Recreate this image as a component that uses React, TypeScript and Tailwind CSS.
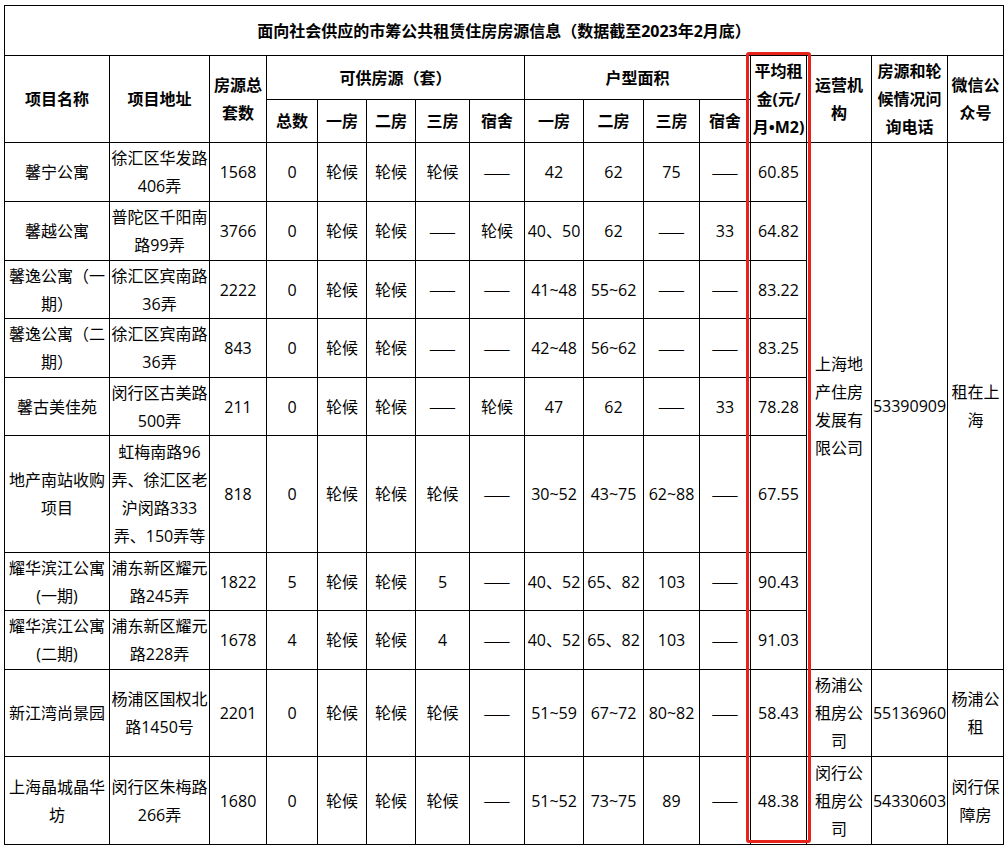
import * as React from "react";

type Row = {
    h: string;
    cells: React.ReactNode[];
};

// em dashes look joined only in the CJK face
const D = <span className="font-['Noto_Sans_CJK_SC',sans-serif]">——</span>;

const colWidths = [
    "w-[105px]", "w-[100px]", "w-[57px]", "w-[51px]", "w-[49px]", "w-[49px]", "w-[54px]", "w-[55px]",
    "w-[59px]", "w-[60px]", "w-[56px]", "w-[51px]", "w-[56px]", "w-[65px]", "w-[76px]", "w-[56px]",
];

const rows: Row[] = [
    { h: "h-[59px]", cells: ["馨宁公寓", <>徐汇区华发路<br />406弄</>, "1568", "0", "轮候", "轮候", "轮候", D, "42", "62", "75", D, "60.85"] },
    { h: "h-[59px]", cells: ["馨越公寓", <>普陀区千阳南<br />路99弄</>, "3766", "0", "轮候", "轮候", D, "轮候", "40、50", "62", D, "33", "64.82"] },
    { h: "h-[58px]", cells: [<>馨逸公寓（一<br />期）</>, <>徐汇区宾南路<br />36弄</>, "2222", "0", "轮候", "轮候", D, D, "41~48", "55~62", D, D, "83.22"] },
    { h: "h-[59px]", cells: [<>馨逸公寓（二<br />期）</>, <>徐汇区宾南路<br />36弄</>, "843", "0", "轮候", "轮候", D, D, "42~48", "56~62", D, D, "83.25"] },
    { h: "h-[58px]", cells: ["馨古美佳苑", <>闵行区古美路<br />500弄</>, "211", "0", "轮候", "轮候", D, "轮候", "47", "62", D, "33", "78.28"] },
    { h: "h-[117px]", cells: [<>地产南站收购<br />项目</>, <>虹梅南路96<br />弄、徐汇区老<br />沪闵路333<br />弄、150弄等</>, "818", "0", "轮候", "轮候", "轮候", D, "30~52", "43~75", "62~88", D, "67.55"] },
    { h: "h-[58px]", cells: [<>耀华滨江公寓<br />(一期)</>, <>浦东新区耀元<br />路245弄</>, "1822", "5", "轮候", "轮候", "5", D, "40、52", "65、82", "103", D, "90.43"] },
    { h: "h-[59px]", cells: [<>耀华滨江公寓<br />(二期)</>, <>浦东新区耀元<br />路228弄</>, "1678", "4", "轮候", "轮候", "4", D, "40、52", "65、82", "103", D, "91.03"] },
    { h: "h-[87px]", cells: ["新江湾尚景园", <>杨浦区国权北<br />路1450号</>, "2201", "0", "轮候", "轮候", "轮候", D, "51~59", "67~72", "80~82", D, "58.43"] },
    { h: "h-[88px]", cells: [<>上海晶城晶华<br />坊</>, <>闵行区朱梅路<br />266弄</>, "1680", "0", "轮候", "轮候", "轮候", D, "51~52", "73~75", "89", D, "48.38"] },
];

// trailing cells for rows with their own operator info
const tails: Record<number, React.ReactNode[]> = {
    8: [<>杨浦公<br />租房公<br />司</>, "55136960", <>杨浦公<br />租</>],
    9: [<>闵行公<br />租房公<br />司</>, "54330603", <>闵行保<br />障房</>],
};

const td = "border border-black px-0 py-0 text-center align-middle whitespace-nowrap";
const th = "border border-black px-0 py-0 text-center align-middle whitespace-nowrap font-bold";

export default function App() {
    return (
        <div className="bg-white min-h-[850px] pl-[4px] pt-[5px] text-black text-[16px] leading-[28px] font-['Open_Sans','Noto_Sans_CJK_SC',sans-serif]">
            <div className="relative w-[999px]">
                <table className="table-fixed border-collapse w-[999px]">
                    <colgroup>
                        {colWidths.map((w, i) => (
                            <col key={i} className={w} />
                        ))}
                    </colgroup>
                    <thead>
                        <tr className="h-[50px]">
                            <th colSpan={16} className={th}>
                                面向社会供应的市筹公共租赁住房房源信息（数据截至2023年2月底）
                            </th>
                        </tr>
                        <tr className="h-[44px]">
                            <th rowSpan={2} className={th}>项目名称</th>
                            <th rowSpan={2} className={th}>项目地址</th>
                            <th rowSpan={2} className={th}>房源总<br />套数</th>
                            <th colSpan={5} className={th}>可供房源（套）</th>
                            <th colSpan={4} className={th}>户型面积</th>
                            <th rowSpan={2} className={th}>平均租<br />金(元/<br />月•M2)</th>
                            <th rowSpan={2} className={th}>运营机<br />构</th>
                            <th rowSpan={2} className={th}>房源和轮<br />候情况问<br />询电话</th>
                            <th rowSpan={2} className={th}>微信公<br />众号</th>
                        </tr>
                        <tr className="h-[43px]">
                            <th className={th}>总数</th>
                            <th className={th}>一房</th>
                            <th className={th}>二房</th>
                            <th className={th}>三房</th>
                            <th className={th}>宿舍</th>
                            <th className={th}>一房</th>
                            <th className={th}>二房</th>
                            <th className={th}>三房</th>
                            <th className={th}>宿舍</th>
                        </tr>
                    </thead>
                    <tbody>
                        {rows.map((row, i) => (
                            <tr key={i} className={row.h}>
                                {row.cells.map((c, j) => (
                                    <td key={j} className={td}>{c}</td>
                                ))}
                                {i === 0 && (
                                    <>
                                        <td rowSpan={8} className={td}>上海地<br />产住房<br />发展有<br />限公司</td>
                                        <td rowSpan={8} className={td}>53390909</td>
                                        <td rowSpan={8} className={td}>租在上<br />海</td>
                                    </>
                                )}
                                {tails[i] && tails[i].map((c, j) => (
                                    <td key={"t" + j} className={td}>{c}</td>
                                ))}
                            </tr>
                        ))}
                    </tbody>
                </table>
                {/* red highlight around the rent column */}
                <div className="absolute left-[742px] top-[47px] w-[65px] h-[791px] border-[3px] border-[#e8231c] rounded-[3px] pointer-events-none" />
            </div>
        </div>
    );
}
